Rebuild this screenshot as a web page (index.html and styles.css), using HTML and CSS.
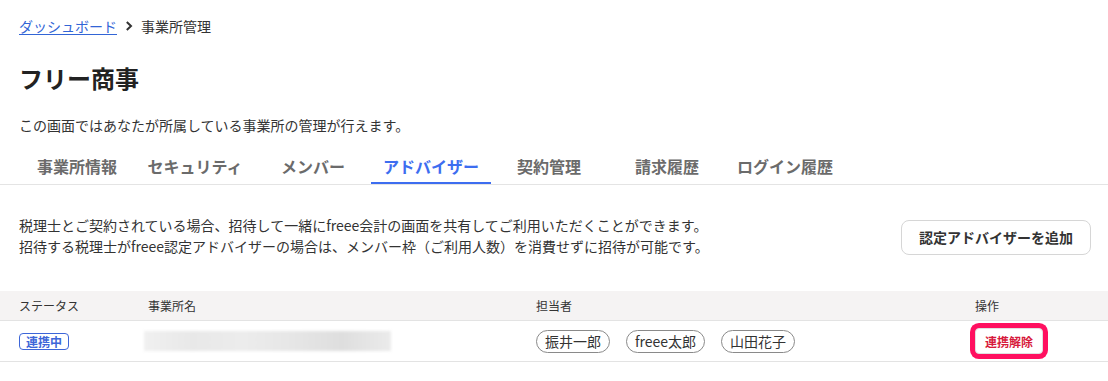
FILE: index.html
```html
<!DOCTYPE html>
<html lang="ja">
<head>
<meta charset="utf-8">
<title>事業所管理</title>
<link rel="stylesheet" href="styles.css">
</head>
<body>
<div class="page">
  <nav class="breadcrumb">
    <a class="crumb-link" href="#">ダッシュボード</a>
    <svg class="chev" width="8" height="10" viewBox="0 0 8 10"><path d="M1.8 1 L6 5 L1.8 9" fill="none" stroke="#333" stroke-width="2"/></svg>
    <span class="crumb-current">事業所管理</span>
  </nav>
  <h1 class="title">フリー商事</h1>
  <p class="lead">この画面ではあなたが所属している事業所の管理が行えます。</p>
  <div class="tabs">
    <div class="tab">事業所情報</div>
    <div class="tab">セキュリティ</div>
    <div class="tab">メンバー</div>
    <div class="tab active">アドバイザー</div>
    <div class="tab">契約管理</div>
    <div class="tab">請求履歴</div>
    <div class="tab">ログイン履歴</div>
  </div>
  <div class="intro">
    <p class="intro-text">税理士とご契約されている場合、招待して一緒にfreee会計の画面を共有してご利用いただくことができます。<br>招待する税理士がfreee認定アドバイザーの場合は、メンバー枠（ご利用人数）を消費せずに招待が可能です。</p>
    <button class="add-btn">認定アドバイザーを追加</button>
  </div>
  <div class="table">
    <div class="row head">
      <div class="cell">ステータス</div>
      <div class="cell">事業所名</div>
      <div class="cell">担当者</div>
      <div class="cell">操作</div>
    </div>
    <div class="row body">
      <div class="cell"><span class="badge">連携中</span></div>
      <div class="cell"><div class="blurred"></div></div>
      <div class="cell pills">
        <span class="pill">振井一郎</span>
        <span class="pill">freee太郎</span>
        <span class="pill">山田花子</span>
      </div>
      <div class="cell"><button class="unlink-btn">連携解除</button></div>
    </div>
  </div>
</div>
</body>
</html>
```

FILE: styles.css
```css
* { box-sizing: border-box; }
html, body { margin: 0; padding: 0; background: #fff; }
body {
  font-family: "Noto Sans CJK JP", "Noto Sans", sans-serif;
  color: #333;
  font-size: 14px;
}
.page { width: 1108px; }

.breadcrumb {
  display: flex;
  align-items: center;
  gap: 8px;
  padding: 16px 19px 0;
  height: 36px;
  line-height: 20px;
  font-size: 14px;
}
.crumb-link { color: #3265d6; text-decoration: underline; text-underline-offset: 2px; }
.crumb-current { color: #333; }
.chev { display: block; }

.title {
  margin: 26px 0 0;
  padding: 0 19px;
  font-size: 24px;
  line-height: 32px;
  font-weight: 700;
  color: #222;
}
.lead {
  margin: 21px 0 0;
  padding: 0 19px;
  font-size: 14px;
  line-height: 20px;
  color: #333;
}

.tabs {
  display: flex;
  margin-top: 13px;
  padding-left: 18px;
  border-bottom: 1px solid #e4e4e4;
}
.tab {
  position: relative;
  width: 118px;
  text-align: center;
  padding: 6px 0;
  line-height: 24px;
  font-size: 16px;
  font-weight: 700;
  color: #6b6b6b;
}
.tab.active { color: #3d6df0; }
.tab.active::after {
  content: "";
  position: absolute;
  left: -1px;
  right: -1px;
  bottom: 0;
  height: 2px;
  background: #3d6df0;
}

.intro {
  display: flex;
  justify-content: space-between;
  align-items: center;
  padding: 30px 17px 34px 19px;
}
.intro-text {
  margin: 0;
  font-size: 14px;
  line-height: 21px;
  color: #333;
}
.add-btn {
  height: 35px;
  padding: 0 17px;
  border: 1px solid #d6d6d6;
  border-radius: 8px;
  background: #fff;
  font-family: inherit;
  font-size: 14px;
  font-weight: 700;
  color: #333;
  margin-top: 2px;
}

.table { width: 1108px; }
.row {
  display: grid;
  grid-template-columns: 129px 388px 439px 1fr;
  border-bottom: 1px solid #e3e3e3;
}
.row.head { height: 30px; background: #f5f3f3; }
.row.body { height: 41px; }
.cell {
  display: flex;
  align-items: center;
  padding-left: 19px;
  font-size: 12px;
  color: #333;
}
.badge {
  display: inline-block;
  border: 1px solid #3d66d8;
  border-radius: 4px;
  padding: 0 6px;
  line-height: 15px;
  font-size: 12px;
  font-weight: 700;
  color: #3d66d8;
  margin-top: 1px;
}
.blurred {
  width: 247px;
  height: 20px;
  margin-left: -4px;
  background: linear-gradient(90deg, #f0f0f0 0%, #e8e8e8 20%, #ececec 40%, #e6e6e6 60%, #dedede 80%, #ebebeb 100%);
  filter: blur(1.5px);
}
.pills { gap: 16px; }
.pill {
  display: inline-block;
  border: 1px solid #8a8a8a;
  border-radius: 12px;
  padding: 0 8px;
  line-height: 21px;
  font-size: 14px;
  color: #333;
}
.unlink-btn {
  height: 26px;
  padding: 0 9px;
  border: 1px solid #e0e0e0;
  border-radius: 4px;
  background: #fff;
  font-family: inherit;
  font-size: 12px;
  font-weight: 700;
  color: #d7193c;
  box-shadow: 0 0 0 5px #ff1060;
  margin-left: 0;
}
```
